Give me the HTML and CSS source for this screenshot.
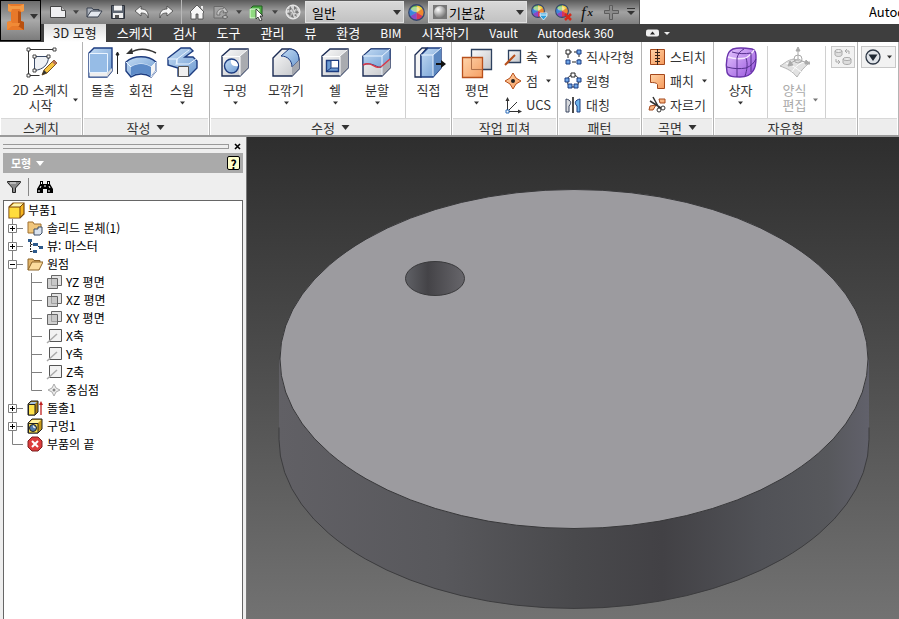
FILE: index.html
```html
<!DOCTYPE html>
<html lang="ko">
<head>
    <meta charset="UTF-8">
    <meta name="viewport" content="width=device-width, initial-scale=1.0">
    <title>Autodesk Inventor</title>
    <link rel="stylesheet" href="styles.css">
</head>
<body>
    <!-- Shared shapes -->
    <svg class="defs" width="0" height="0" aria-hidden="true">
        <defs>
            <linearGradient id="blue" x1="0" y1="0" x2="1" y2="1"><stop offset="0" stop-color="#c4dcf4"/><stop offset="1" stop-color="#6f9cd2"/></linearGradient>
            <linearGradient id="grey" x1="0" y1="0" x2="1" y2="1"><stop offset="0" stop-color="#fafafa"/><stop offset="1" stop-color="#c2c4c8"/></linearGradient>
            <linearGradient id="orange" x1="0" y1="0" x2="1" y2="1"><stop offset="0" stop-color="#ffd2a6"/><stop offset="1" stop-color="#f59a5c"/></linearGradient>
            <linearGradient id="purple" x1="0" y1="0" x2="1" y2="1"><stop offset="0" stop-color="#e6c8ff"/><stop offset="1" stop-color="#9550dc"/></linearGradient>
            <radialGradient id="ball" cx=".35" cy=".3" r=".8"><stop offset="0" stop-color="#fff"/><stop offset="1" stop-color="#666"/></radialGradient>
            <linearGradient id="side" x1="0" x2="1"><stop offset="0" stop-color="#616065"/><stop offset=".28" stop-color="#58585c"/><stop offset=".5" stop-color="#49494c"/><stop offset=".65" stop-color="#424145"/><stop offset=".82" stop-color="#515257"/><stop offset=".93" stop-color="#57585c"/><stop offset="1" stop-color="#61616b"/></linearGradient>
            <linearGradient id="bore" x1="0" x2="1"><stop offset="0" stop-color="#606166"/><stop offset=".38" stop-color="#444347"/><stop offset="1" stop-color="#67666b"/></linearGradient>
        </defs>
        <symbol id="caret" viewBox="0 0 8 5"><path d="M0 0h8L4 5z" fill="currentColor"/></symbol>
        <symbol id="wheel" viewBox="0 0 16 16">
            <path d="M8 8V1a7 7 0 0 1 6 3.500z" fill="#f2d03c"/><path d="M8 8l6-3.500a7 7 0 0 1 0 7z" fill="#f0882e"/>
            <path d="M8 8l6 3.500A7 7 0 0 1 8 15z" fill="#d8365a"/><path d="M8 8v7a7 7 0 0 1-6-3.500z" fill="#8a48c8"/>
            <path d="M8 8l-6 3.500a7 7 0 0 1 0-7z" fill="#3b86dc"/><path d="M8 8L2 4.500A7 7 0 0 1 8 1z" fill="#63b848"/>
            <circle cx="8" cy="8" r="7.300" fill="none" stroke="#34466e" stroke-width="1.200"/><ellipse cx="7" cy="5" rx="4" ry="2.500" fill="#fff" opacity=".45"/>
        </symbol>
        <symbol id="t-line" viewBox="0 0 19 18"><path d="M8.500 0v18" stroke="#808080"/></symbol>
        <symbol id="t-tee" viewBox="0 0 19 18"><path d="M8.500 0v18M8 9.500h12" stroke="#808080"/></symbol>
        <symbol id="t-end" viewBox="0 0 19 18"><path d="M8.500 0v9.500h11" fill="none" stroke="#808080"/></symbol>
        <symbol id="t-plus" viewBox="0 0 19 18"><path d="M8.500 0v18M8 9.500h12" stroke="#808080"/><path d="M4.500 5.500h8v8h-8z" fill="#fff" stroke="#808080"/><path d="M6 9.500h5M8.500 7v5" stroke="#000"/></symbol>
        <symbol id="t-minus" viewBox="0 0 19 18"><path d="M8.500 0v18M8 9.500h12" stroke="#808080"/><path d="M4.500 5.500h8v8h-8z" fill="#fff" stroke="#808080"/><path d="M6 9.500h5" stroke="#000"/></symbol>
        <symbol id="n-plane" viewBox="0 0 16 16"><path d="M5.500 1.500h10v10h-10z" fill="#e4e4e4" stroke="#666"/><path d="M1.500 4.500h10v10h-10z" fill="#bbb" fill-opacity=".7" stroke="#666"/></symbol>
        <symbol id="n-axis" viewBox="0 0 16 16"><path d="M3.500 1.500h12v12h-12z" fill="#f2f2f2" stroke="#555"/><path d="M1 15L11 6" stroke="#aaa" stroke-width="1.500"/></symbol>
    </svg>

    <header class="titlebar">
        <button class="app-menu" aria-label="Inventor">
            <svg width="20" height="28" viewBox="0 0 20 28"><path d="M2 1h16v7l-3 1v9l3 1v8H1v-8l4-1V9L2 8z" fill="#e8792a"/><path d="M2 1l3 2h9l4-2v7l-3 1-1-3H6L5 9 2 8z" fill="#f39a45"/><path d="M12 8l3 1v9l3 1v8l-6-4z" fill="#b9500f"/><path d="M5 18l-4 1v8l5-4h7l1-3H6z" fill="#f08a36"/></svg>
            <svg class="caret" width="8" height="5"><use href="#caret"/></svg>
        </button>
        <div class="bars">
            <div class="top-row">
                <div class="quickbar">
                    <button class="quick" aria-label="새로 만들기"><svg width="18" height="16" viewBox="0 0 18 16"><path d="M1.500 2.500h11l4 4v7h-15z" fill="#f0f0f2" stroke="#444"/><path d="M12.500 2.500v4h4" fill="#bbb" stroke="#555"/></svg></button>
                    <button class="drop" aria-label="새로 만들기 옵션"><svg width="6" height="4"><use href="#caret"/></svg></button>
                    <button class="quick" aria-label="열기"><svg width="18" height="16" viewBox="0 0 18 16"><path d="M2 13V4h5l1 1.500h6V8" fill="#aeb4be" stroke="#38404e"/><path d="M2 13L6 7h11l-4 6z" fill="#e4e8ee" stroke="#38404e"/></svg></button>
                    <button class="quick" aria-label="저장"><svg width="16" height="16" viewBox="0 0 16 16"><path d="M1.500 1.500h13v13h-13z" fill="#5c6470" stroke="#2c3038"/><path d="M4 1.500h8v5H4z" fill="#f4f4f4"/><path d="M3 9h10v5H3z" fill="#eee"/><path d="M5 11h4v3H5z" fill="#555"/></svg></button>
                    <button class="quick" aria-label="실행 취소"><svg width="16" height="16" viewBox="0 0 16 16"><path d="M1 7l6-5v3c5 0 8 3 7 9-1-4-3-5-7-5v3z" fill="#f4f4f4" stroke="#444" stroke-width=".8"/></svg></button>
                    <button class="quick" aria-label="다시 실행"><svg width="16" height="16" viewBox="0 0 16 16"><path d="M15 7L9 2v3C4 5 1 8 2 14c1-4 3-5 7-5v3z" fill="#f4f4f4" stroke="#444" stroke-width=".8"/></svg></button>
                    <span class="quick-sep"></span>
                    <button class="quick" aria-label="홈"><svg width="16" height="16" viewBox="0 0 16 16"><path d="M8 1l7 7-1 1v6H9v-5H7v5H2V9L1 8z" fill="#f6f6f6" stroke="#444" stroke-width=".8"/><path d="M12 2h2v4l-2-2z" fill="#eee"/></svg></button>
                    <button class="quick" aria-label="업데이트"><svg width="17" height="16" viewBox="0 0 17 16"><path d="M1 2.500h9l3 3V14H1z" fill="#a2a2a2" stroke="#6a6a6a"/><path d="M4 11a5 5 0 0 1 6-6l1-2 4 5-5 1 1-2a3 3 0 0 0-4 4z" fill="#c4c4c4" stroke="#666" stroke-width=".8"/><path d="M9 13l3-2 3 2-3 2z" fill="#bbb" stroke="#666"/></svg></button>
                    <button class="drop" aria-label="업데이트 옵션"><svg width="6" height="4"><use href="#caret"/></svg></button>
                    <button class="quick" aria-label="선택"><svg width="16" height="17" viewBox="0 0 16 17"><path d="M1 5l3-3h9v9l-3 3H1z" fill="#4fae45" stroke="#1f5c1f"/><path d="M1 5h9v9H1z" fill="#8fda80" stroke="#e6ffe0"/><path d="M7 5v10l2-2 2 4 2-1-2-4h3z" fill="#fff" stroke="#222" stroke-width=".8"/></svg></button>
                    <button class="drop" aria-label="선택 옵션"><svg width="6" height="4"><use href="#caret"/></svg></button>
                    <button class="quick" aria-label="재질 편집"><svg width="16" height="16" viewBox="0 0 16 16"><circle cx="8" cy="8" r="7" fill="#d4d4d4" stroke="#f0f0f0"/><path d="M5 2l2 3-3 2zM9 2l3 2-3 2zM12 6l2 3-4 0zM2 9l4-1-1 4zM7 9l2 5-3-1zM11 10l1 3-3-2z" fill="#777"/><path d="M7 5l2 4M4 7l3 2M12 4l-2 5M6 8l-1 5M11 10l2-1M2 6l3-1" stroke="#8c8c8c" stroke-width=".8"/></svg></button>
                    <div class="combo">
                        <select aria-label="재질"><option>일반</option></select>
                        <svg class="caret" width="8" height="5"><use href="#caret"/></svg>
                    </div>
                    <button class="quick" aria-label="모양 색상"><svg width="17" height="17"><use href="#wheel"/></svg></button>
                    <div class="combo">
                        <svg width="14" height="14" viewBox="0 0 14 14"><path d="M0 0h14v14H0z" fill="#777"/><circle cx="7" cy="7" r="6" fill="url(#ball)"/></svg>
                        <select aria-label="모양"><option>기본값</option></select>
                        <svg class="caret" width="8" height="5"><use href="#caret"/></svg>
                    </div>
                    <button class="quick" aria-label="모양 조정"><svg width="17" height="17" viewBox="0 0 17 17"><svg width="14" height="14"><use href="#wheel"/></svg><path d="M9 9h7v3l-3.500 4L9 12z" fill="#2d9fdc" stroke="#e4f6ff" stroke-width=".8"/><path d="M9 11h7" stroke="#fff"/></svg></button>
                    <button class="quick" aria-label="모양 지우기"><svg width="17" height="17" viewBox="0 0 17 17"><svg width="14" height="14"><use href="#wheel"/></svg><path d="M10 10l6 6m0-6l-6 6" stroke="#d42a1c" stroke-width="2.500"/></svg></button>
                    <button class="quick fx" aria-label="매개변수"><i>f</i><sub>x</sub></button>
                    <button class="quick" aria-label="추가"><svg width="17" height="17" viewBox="0 0 17 17"><path d="M6.500 1.500h3v5h6v3h-6v6h-3v-6h-5v-3h5z" fill="#8a8a8a" stroke="#5c5c5c"/></svg></button>
                    <button class="drop wide" aria-label="빠른 실행 사용자화"><svg width="8" height="8" viewBox="0 0 8 8"><path d="M0 .5h8" stroke="#333"/><path d="M0 3h8L4 7z" fill="#333"/></svg></button>
                </div>
                <span class="app-title">Autodesk Inventor</span>
            </div>
            <nav class="tabs">
                <a class="tab active" href="#">3D 모형</a>
                <a class="tab" href="#">스케치</a>
                <a class="tab" href="#">검사</a>
                <a class="tab" href="#">도구</a>
                <a class="tab" href="#">관리</a>
                <a class="tab" href="#">뷰</a>
                <a class="tab" href="#">환경</a>
                <a class="tab latin" href="#">BIM</a>
                <a class="tab" href="#">시작하기</a>
                <a class="tab latin" href="#">Vault</a>
                <a class="tab latin" href="#">Autodesk 360</a>
                <button class="minimize" aria-label="리본 최소화"><svg width="26" height="8" viewBox="0 0 26 8"><rect y=".5" width="13" height="7" rx="2" fill="#eee"/><path d="M4 5.500h5l-2.500-3z" fill="#222"/><path d="M18 3h6l-3 3z" fill="#eee"/></svg></button>
            </nav>
        </div>
    </header>

    <section class="ribbon">
        <div class="panel">
            <div class="tools">
                <button class="tool sketch">
                    <svg width="34" height="34" viewBox="0 0 34 34"><path d="M4.500 3.500h26M4.500 3.500v26h11" fill="none" stroke="#333"/><path d="M10.500 10.500h14c0 8-5 13-14 14z" fill="#eef1f5" stroke="#3a4a68"/><path d="M3 2h3v3H3zM29 2h3v3h-3zM3 28h3v3H3zM9 9h3v3H9zM23 9h3v3h-3zM9 23h3v3H9z" fill="#fff" stroke="#333" stroke-width=".9"/><path d="M18 29l2-5L30 14l3 3-10 10z" fill="#f6c440" stroke="#7a5520"/><path d="M28 16l2-2 3 3-2 2z" fill="#b87058"/><path d="M18 29l2-5 3 3z" fill="#333"/></svg>
                    <span>2D 스케치<br>시작</span>
                </button>
                <svg class="caret side" width="5" height="4"><use href="#caret"/></svg>
            </div>
            <h2>스케치</h2>
        </div>

        <div class="panel">
            <div class="tools create">
                <button class="tool">
                    <svg width="34" height="34" viewBox="0 0 34 34"><path d="M3 7l5-5h18v23l-5 6H3z" fill="url(#blue)" stroke="#1d3c80" stroke-width="1.400"/><path d="M3.500 7.500h18v19h-18z" fill="#96bce6" stroke="#eaf4ff"/><path d="M3.500 27h18v3.500h-18z" fill="#eee"/><path d="M21 27l5-5v3l-5 6z" fill="#ddd"/><path d="M31.500 28V7M30 9l1.500-3L33 9z" fill="#222" stroke="#222"/></svg>
                    <span>돌출</span>
                </button>
                <button class="tool">
                    <svg width="34" height="34" viewBox="0 0 34 34"><path d="M6 7c7-5 17-5 26 0" fill="none" stroke="#333" stroke-width="1.500"/><path d="M2 8l6-6 1 6z" fill="#333"/><path d="M2 16c8-7 22-7 30 0v9l-5 6c-6-4-14-4-20 0l-5-6z" fill="url(#blue)" stroke="#1d3c80" stroke-width="1.400"/><path d="M2 16l5 5c6-4 14-4 20 0v10l5-6v-9l-5 5" fill="none" stroke="#eaf4ff"/><path d="M7 21c6-4 14-4 20 0v9c-6-4-14-4-20 0z" fill="#5d8bc8"/><path d="M27 21l4-4v8l-4 5z" fill="#f4f4f4"/></svg>
                    <span>회전</span>
                </button>
                <button class="tool">
                    <svg width="34" height="34" viewBox="0 0 34 34"><path d="M3 12L16 2h9l3 3-8 6h8l4 4v7l-8 8H13v-8L3 19z" fill="url(#blue)" stroke="#1d3c80" stroke-width="1.400"/><path d="M3 13h9l12-9M12 13v5h12l7-5M12 13l-1 6" fill="none" stroke="#eaf4ff"/><path d="M13.500 20.500h10v10h-10z" fill="#f0f0f0" stroke="#555"/></svg>
                    <span>스윕</span>
                    <svg class="caret" width="5" height="4"><use href="#caret"/></svg>
                </button>
            </div>
            <h2>작성 <svg width="9" height="5"><use href="#caret"/></svg></h2>
        </div>

        <div class="panel">
            <div class="tools modify">
                <button class="tool">
                    <svg width="34" height="34" viewBox="0 0 34 34"><path d="M4 10l8-7h18v19l-8 8H4z" fill="url(#grey)" stroke="#1c2c54" stroke-width="1.400"/><path d="M22 10l8-7v19l-8 8z" fill="#a9abb0"/><path d="M4.500 10.500H22v19M22 10l7-6" fill="none" stroke="#fff"/><circle cx="13.500" cy="20" r="7" fill="url(#blue)" stroke="#1d3c80" stroke-width="1.400"/><path d="M13 14c-1 4 2 7 7 6 0-4-3-6-7-6z" fill="#fff"/></svg>
                    <span>구멍</span>
                    <svg class="caret" width="5" height="4"><use href="#caret"/></svg>
                </button>
                <button class="tool">
                    <svg width="34" height="34" viewBox="0 0 34 34"><path d="M4 12l9-9h7c7 0 10 5 10 11v9l-7 7H4z" fill="url(#grey)" stroke="#1c2c54" stroke-width="1.400"/><path d="M12 10l8-7c7 0 10 5 10 11l-7 7c0-6-4-11-11-11z" fill="url(#blue)" stroke="#1d3c80"/><path d="M23 21l7-7v9l-7 7z" fill="#a5a8af"/></svg>
                    <span>모깎기</span>
                    <svg class="caret" width="5" height="4"><use href="#caret"/></svg>
                </button>
                <button class="tool">
                    <svg width="34" height="34" viewBox="0 0 34 34"><path d="M4 10l8-7h18v19l-8 8H4z" fill="url(#grey)" stroke="#1c2c54" stroke-width="1.400"/><path d="M22 10l8-7v19l-8 8z" fill="#a9abb0"/><path d="M4.500 10.500H22v19M22 10l7-6" fill="none" stroke="#fff"/><path d="M8.500 14.500h12v11h-12z" fill="#6d9bd2" stroke="#1d3c80" stroke-width="1.400"/><path d="M13 15h7v7h-7z" fill="#fff"/><path d="M13 15v7h7M13 22l-4 3" fill="none" stroke="#1d3c80"/></svg>
                    <span>쉘</span>
                    <svg class="caret" width="5" height="4"><use href="#caret"/></svg>
                </button>
                <button class="tool">
                    <svg width="34" height="34" viewBox="0 0 34 34"><path d="M3 10l8-7h19v19l-8 8H3z" fill="url(#grey)" stroke="#1c2c54" stroke-width="1.400"/><path d="M3 10l8-7h19v11l-8 7c-5 2-9-6-19-2z" fill="url(#blue)" stroke="#1d3c80"/><path d="M22 20l8-7v9l-8 8z" fill="#a9abb0"/><path d="M3 10h19v19M22 10l8-7" fill="none" stroke="#eaf4ff"/><path d="M3 19c9-5 12 6 19 1l8-7" fill="none" stroke="#da3848" stroke-width="1.500"/></svg>
                    <span>분할</span>
                    <svg class="caret" width="5" height="4"><use href="#caret"/></svg>
                </button>
                <button class="tool divided">
                    <svg width="34" height="34" viewBox="0 0 34 34"><path d="M3 9l7-7h5L9 9v22H3z" fill="#f4f4f4" stroke="#1c2c54" stroke-width="1.300"/><path d="M9 9l7-7h13v20l-8 9H9z" fill="url(#blue)" stroke="#1d3c80" stroke-width="1.400"/><path d="M21 9l8-7v20l-8 9z" fill="#5c88c0"/><path d="M9 9h12v21M21 9l8-7" fill="none" stroke="#eaf4ff"/><path d="M24 17h5v-3l5 4-5 4v-3h-5z" fill="#111"/></svg>
                    <span>직접</span>
                </button>
            </div>
            <h2>수정 <svg width="9" height="5"><use href="#caret"/></svg></h2>
        </div>

        <div class="panel">
            <div class="tools">
                <button class="tool plane">
                    <svg width="34" height="34" viewBox="0 0 34 34"><path d="M11.500 3.500h20v20h-20z" fill="url(#grey)" stroke="#2c405e" stroke-width="1.300"/><path d="M2.500 11.500h20v20h-20z" fill="url(#orange)" fill-opacity=".95" stroke="#b8501c" stroke-width="1.300"/><path d="M11.500 11v12.500H22" fill="none" stroke="#b07048"/></svg>
                    <span>평면</span>
                    <svg class="caret" width="5" height="4"><use href="#caret"/></svg>
                </button>
                <div class="rows">
                    <button class="row"><svg width="18" height="18" viewBox="0 0 18 18"><path d="M4.500 2.500h12v12h-12z" fill="url(#grey)" stroke="#2c405e" stroke-width="1.300"/><path d="M1 17L11 7" stroke="#b8501c" stroke-width="2"/></svg><span>축</span><svg class="caret end" width="5" height="4"><use href="#caret"/></svg></button>
                    <button class="row"><svg width="18" height="18" viewBox="0 0 18 18"><path d="M9 1l3 5 5 3-5 3-3 5-3-5-5-3 5-3z" fill="url(#orange)" stroke="#b8501c"/><circle cx="9" cy="9" r="2" fill="#222"/></svg><span>점</span><svg class="caret end" width="5" height="4"><use href="#caret"/></svg></button>
                    <button class="row"><svg width="18" height="18" viewBox="0 0 18 18"><path d="M3.500 3v12.500H16M3.500 15.500L13 6" fill="none" stroke="#333"/><path d="M1.500 5l2-4 2 4zM14 13.500l4 2-4 2z" fill="#333"/><path d="M2 14h3v3H2z" fill="#fff" stroke="#286bb8"/></svg><span>UCS</span></button>
                </div>
            </div>
            <h2>작업 피쳐</h2>
        </div>

        <div class="panel">
            <div class="tools list">
                <div class="rows">
                    <button class="row"><svg width="18" height="18" viewBox="0 0 18 18"><path d="M4 4h11v10H4z" fill="none" stroke="#222" stroke-dasharray="4 2"/><path d="M2 2h4v4H2z" fill="#fff" stroke="#222"/><path d="M13 2h4v4h-4zM2 12h4v4H2zM13 12h4v4h-4z" fill="#6fa6e8" stroke="#1d3c80"/></svg><span>직사각형</span></button>
                    <button class="row"><svg width="18" height="18" viewBox="0 0 18 18"><circle cx="9" cy="9" r="6" fill="none" stroke="#333"/><path d="M7 1h4v4H7z" fill="#fff" stroke="#222"/><path d="M1 6h4v4H1zM13 6h4v4h-4zM4 12h4v4H4zM10 12h4v4h-4z" fill="#6fa6e8" stroke="#1d3c80"/></svg><span>원형</span></button>
                    <button class="row"><svg width="18" height="18" viewBox="0 0 18 18"><path d="M2 3c5 1 6 4 3 7v6H2z" fill="#d8dade" stroke="#3a4660"/><path d="M16 3c-5 1-6 4-3 7v6h3z" fill="#6cb4ec" stroke="#1d3c80"/><path d="M9 1v16" stroke="#111" stroke-width="1.500"/></svg><span>대칭</span></button>
                </div>
            </div>
            <h2>패턴</h2>
        </div>

        <div class="panel">
            <div class="tools list">
                <div class="rows">
                    <button class="row"><svg width="18" height="18" viewBox="0 0 18 18"><path d="M2.500 1.500h14v15h-14z" fill="url(#orange)" stroke="#a4481c"/><path d="M9.500 1v16M7 4.500h5M7 7.500h5M7 10.500h5M7 13.500h5" stroke="#3a2418"/></svg><span>스티치</span></button>
                    <button class="row"><svg width="18" height="18" viewBox="0 0 18 18"><path d="M2.500 2.500h14v14h-7v-4c-1-2-4-2-7-2z" fill="url(#orange)" stroke="#a4481c"/></svg><span>패치</span><svg class="caret end" width="5" height="4"><use href="#caret"/></svg></button>
                    <button class="row"><svg width="18" height="18" viewBox="0 0 18 18"><path d="M11 3h6v4h-5zM2 10l6-1-3 5H1z" fill="url(#orange)" stroke="#a4481c"/><path d="M5 1l6 11M2 5l11 7" stroke="#333" stroke-width="1.500"/><circle cx="11" cy="14" r="2" fill="none" stroke="#333"/><circle cx="15" cy="12" r="2" fill="none" stroke="#333"/></svg><span>자르기</span></button>
                </div>
            </div>
            <h2>곡면 <svg width="9" height="5"><use href="#caret"/></svg></h2>
        </div>

        <div class="panel">
            <div class="tools freeform">
                <button class="tool">
                    <svg width="34" height="34" viewBox="0 0 34 34"><path d="M9 3c6-2 13-1 19 0 4 1 4 5 4 9s0 9-3 13c-3 5-7 6-13 6S4 31 3 26 2 17 3 12s2-7 6-9z" fill="url(#purple)" stroke="#6a34ac" stroke-width="1.400"/><path d="M4 11c6 2 12 2 18 1 3-2 6-4 8-8" fill="none" stroke="#f6e8ff" stroke-width="1.500"/><path d="M22 12c2 6 1 12-1 18M13 12V31M3 21c7 2 13 2 19 1 5-2 8-5 10-9M13 12c1-4 3-7 7-9M8 6c7 2 13 2 19 1v19" fill="none" stroke="#56308e"/></svg>
                    <span>상자</span>
                    <svg class="caret" width="5" height="4"><use href="#caret"/></svg>
                </button>
                <button class="tool divided edit" disabled>
                    <svg width="34" height="34" viewBox="0 0 34 34"><path d="M2 20c4-2 7-6 14-7 5 2 10 4 16 3-4 4-8 7-13 15-5-6-9-8-17-11z" fill="#e2e2e2" stroke="#b4b4b4"/><path d="M8 17c6 2 10 5 15 9M14 26c3-5 6-8 12-10" fill="none" stroke="#fff"/><circle cx="20" cy="13" r="4" fill="none" stroke="#aaa"/><path d="M20 13V4M20 13l9 4M20 13l-9 5M18 5l2-4 2 4zM28 14l4 4h-5zM12 15l-2 5 5-1z" fill="#aaa" stroke="#aaa"/></svg>
                    <span>양식<br>편집</span>
                </button>
                <svg class="caret side muted" width="5" height="4"><use href="#caret"/></svg>
                <div class="divided convert">
                    <button class="boxed" aria-label="변환" disabled><svg width="18" height="18" viewBox="0 0 18 18"><path d="M1 3v4c1 2 6 2 7 0V3M9 11v4c1 2 7 2 8 0v-4" fill="#ddd" stroke="#aaa"/><ellipse cx="4.500" cy="3" rx="3.500" ry="1.500" fill="#eee" stroke="#aaa"/><ellipse cx="13" cy="11" rx="4" ry="1.500" fill="#eee" stroke="#aaa"/><path d="M15 6V3h-4M13 1l-2 2 2 2M2 11v3h4M4 12l2 2-2 2" fill="none" stroke="#aaa"/></svg></button>
                </div>
            </div>
            <h2>자유형</h2>
        </div>

        <div class="panel">
            <div class="tools extra">
                <button class="boxed" aria-label="표시"><svg width="16" height="16" viewBox="0 0 16 16"><circle cx="8" cy="8" r="7" fill="#dfe3e8" stroke="#2d3745" stroke-width="1.300"/><path d="M3.500 5.500h9L8 12z" fill="#1f2833"/></svg><svg class="caret" width="5" height="4"><use href="#caret"/></svg></button>
            </div>
            <h2></h2>
        </div>
    </section>

    <main class="workspace">
        <aside class="browser">
            <div class="grip"><span></span><button aria-label="닫기"><svg width="7" height="7" viewBox="0 0 7 7"><path d="M1 1l5 5m0-5L1 6" stroke="#000" stroke-width="1.600"/></svg></button></div>
            <div class="browser-head">
                <button>모형 <svg width="8" height="5"><use href="#caret"/></svg></button>
                <button class="help" aria-label="도움말">?</button>
            </div>
            <div class="browser-tools">
                <button aria-label="필터"><svg width="14" height="12" viewBox="0 0 14 12"><path d="M.5.500h13v1L8.500 7v4.500h-3V7l-5-5.500z" fill="#888" stroke="#222"/><path d="M3 2h6" stroke="#eee"/></svg></button>
                <button class="find" aria-label="찾기"><svg width="16" height="14" viewBox="0 0 16 14"><path d="M3 1h3v3h4V1h3v3l3 5v4h-6V9H6v4H0V9l3-5z" fill="#000"/><path d="M2 10v2M4.500 2v2M11.500 2v2M12 10v2M4 6L3 8M12 6l1 2M8 5v2" stroke="#fff"/></svg></button>
            </div>
            <ul class="tree">
                <li class="root"><svg width="17" height="17" viewBox="0 0 17 17"><path d="M1 5l4-4h11v11l-4 4H1z" fill="#f6b51e" stroke="#7a4a10" stroke-width="1.200"/><path d="M1.500 5.500h10v10h-10z" fill="#ffdc3c"/><path d="M2 5l4-3.500h9.500L12 5z" fill="#fff6b0"/><path d="M1 5h11v11M12 5l4-4" fill="none" stroke="#7a4a10"/></svg><span>부품1</span></li>
                <li><svg class="cell"><use href="#t-plus"/></svg><svg class="node" viewBox="0 0 16 16"><path d="M1 2h5l1 2h7v9H1z" fill="#f0c67c" stroke="#a07030"/><path d="M7 9h4V7h4v6l-2 2H7z" fill="#d9e2ee" stroke="#3c4c64"/></svg><span>솔리드 본체(1)</span></li>
                <li><svg class="cell"><use href="#t-plus"/></svg><svg class="node" viewBox="0 0 16 16"><path d="M3.500 4v10M3.500 6.500H6M3.500 13.500H6M11 8.500h2" stroke="#222" stroke-dasharray="2 1"/><path d="M1 1h4v3H1zM6 5h5v3H6zM6 12h4v3H6zM12 8h4v3h-4z" fill="#2d5a8c"/></svg><span>뷰: 마스터</span></li>
                <li><svg class="cell"><use href="#t-minus"/></svg><svg class="node" viewBox="0 0 16 16"><path d="M1 14V3h5l1 1.500h6V7" fill="#e2b468" stroke="#8c6428"/><path d="M1 14L5 6h11l-4 8z" fill="#fbdc9c" stroke="#8c6428"/></svg><span>원점</span></li>
                <li><svg class="cell"><use href="#t-line"/></svg><svg class="cell"><use href="#t-tee"/></svg><svg class="node"><use href="#n-plane"/></svg><span>YZ 평면</span></li>
                <li><svg class="cell"><use href="#t-line"/></svg><svg class="cell"><use href="#t-tee"/></svg><svg class="node"><use href="#n-plane"/></svg><span>XZ 평면</span></li>
                <li><svg class="cell"><use href="#t-line"/></svg><svg class="cell"><use href="#t-tee"/></svg><svg class="node"><use href="#n-plane"/></svg><span>XY 평면</span></li>
                <li><svg class="cell"><use href="#t-line"/></svg><svg class="cell"><use href="#t-tee"/></svg><svg class="node"><use href="#n-axis"/></svg><span>X축</span></li>
                <li><svg class="cell"><use href="#t-line"/></svg><svg class="cell"><use href="#t-tee"/></svg><svg class="node"><use href="#n-axis"/></svg><span>Y축</span></li>
                <li><svg class="cell"><use href="#t-line"/></svg><svg class="cell"><use href="#t-tee"/></svg><svg class="node"><use href="#n-axis"/></svg><span>Z축</span></li>
                <li><svg class="cell"><use href="#t-line"/></svg><svg class="cell"><use href="#t-end"/></svg><svg class="node" viewBox="0 0 16 16"><path d="M8 2l2 4 4 2-4 2-2 4-2-4-4-2 4-2z" fill="#eee" stroke="#aaa"/><circle cx="8" cy="8" r="1.500" fill="#888"/></svg><span>중심점</span></li>
                <li><svg class="cell"><use href="#t-plus"/></svg><svg class="node" viewBox="0 0 16 16"><path d="M1 4l3-3h7v11l-3 3H1z" fill="#a87c10" stroke="#222"/><path d="M1.500 4.500H8V15H1.500z" fill="#ffe34a" stroke="#222"/><path d="M2 4l2-2h6L8 4z" fill="#a8c4e0"/><path d="M14 15V3" stroke="#c02020" stroke-width="1.300"/><path d="M12 5l2-4 2 4z" fill="#c02020"/></svg><span>돌출1</span></li>
                <li><svg class="cell"><use href="#t-plus"/></svg><svg class="node" viewBox="0 0 16 16"><path d="M1 5l4-4h10v10l-4 4H1z" fill="#c89a18" stroke="#222"/><path d="M1.500 5.500H11V15H1.500z" fill="#ffe34a" stroke="#222"/><path d="M2 5l3-3h9l-3 3z" fill="#fff3a0"/><circle cx="6" cy="10" r="3.500" fill="#4d79a8" stroke="#222"/><path d="M6 7c-1 2 1 4 3 3z" fill="#eee"/></svg><span>구멍1</span></li>
                <li><svg class="cell"><use href="#t-end"/></svg><svg class="node" viewBox="0 0 16 16"><path d="M5 1h6l4 4v6l-4 4H5l-4-4V5z" fill="#dc3c3c" stroke="#7c2020"/><path d="M5 5l6 6m0-6l-6 6" stroke="#fff" stroke-width="2"/></svg><span>부품의 끝</span></li>
            </ul>
        </aside>

        <div class="viewport">
            <svg viewBox="0 0 652 481" role="img" aria-label="구멍이 있는 원판">
                <path d="M32 222v80a295 169 0 0 0 590 0v-80z" fill="url(#side)"/>
                <path d="M32 290v12a295 169 0 0 0 590 0v-12" fill="none" stroke="#3c3c3e"/>
                <ellipse cx="327" cy="221.500" rx="294" ry="169.500" fill="#9c9b9f" stroke="#38383a"/>
                <ellipse cx="188" cy="141" rx="29.500" ry="17" fill="url(#bore)" stroke="#3a3a3c"/>
            </svg>
        </div>
    </main>
</body>
</html>
```

FILE: styles.css
```css
/* General Styles */
* {
    box-sizing: border-box;
}

body {
    display: flex;
    flex-direction: column;
    height: 100vh;
    margin: 0;
    overflow: hidden;
    background: #eeeeee;
    color: #333;
    font-family: "Noto Sans CJK KR", "Noto Sans", sans-serif;
    font-size: 13px;
    line-height: 15px;
}

button {
    padding: 0;
    background: none;
    border: none;
    color: inherit;
    font: inherit;
    cursor: pointer;
}

svg {
    display: block;
    flex: none;
}

.defs {
    position: absolute;
}

.caret {
    color: #333;
}

/* Title bar */
.titlebar {
    display: flex;
    background: #3e3e3e;
}

.app-menu {
    display: flex;
    align-items: center;
    justify-content: space-between;
    width: 41px;
    height: 41px;
    padding: 0 2px 8px 5px;
    background: linear-gradient(#6c6c6c, #a8a8a8 50%, #7c7c7c);
    border: 1px solid #000;
}

.bars {
    flex: 1;
    min-width: 0;
}

.top-row {
    display: flex;
    height: 24px;
    background: #fff;
}

.quickbar {
    display: flex;
    align-items: center;
    padding-left: 5px;
    background: linear-gradient(#5a5a5a, #a2a2a2 50%, #808080);
    border-right: 1px solid #555;
}

.quick {
    display: flex;
    align-items: center;
    justify-content: center;
    width: 24px;
    height: 24px;
}

.drop {
    display: flex;
    justify-content: center;
    width: 12px;
    color: #444;
}

.drop.wide {
    width: 16px;
}

.quick-sep {
    width: 1px;
    height: 24px;
    margin: 0 3px;
    background: #b8b8b8;
}

.combo {
    display: flex;
    align-items: center;
    width: 99px;
    height: 22px;
    padding: 0 2px 0 4px;
    background: linear-gradient(#d8d8d8, #c2c2c2);
    border: 1px solid #e0e0e0;
}

.combo select {
    flex: 1;
    min-width: 0;
    padding: 0 2px;
    appearance: none;
    background: none;
    border: none;
    color: #000;
    font: inherit;
}

.fx {
    gap: 2px;
    color: #111;
    font-family: "Liberation Serif", serif;
    font-size: 17px;
}

.fx sub {
    font-size: 11px;
    font-weight: bold;
    font-style: italic;
}

.app-title {
    flex: 1;
    min-width: 0;
    margin-left: 229px;
    overflow: hidden;
    color: #000;
    line-height: 24px;
    white-space: nowrap;
}

.tabs {
    display: flex;
    height: 18px;
    padding-left: 3px;
}

.tab {
    padding: 0 10px;
    color: #fff;
    line-height: 17px;
    text-decoration: none;
    white-space: nowrap;
}

.tab.active {
    padding: 0 9px;
    margin-right: 1px;
    background: linear-gradient(#dcdcdc, #fff);
    color: #222;
}

.tab.latin {
    font-size: 12px;
}

.minimize {
    margin-left: 22px;
}

/* Ribbon */
.ribbon {
    display: grid;
    grid-template-rows: 93px;
    grid-template-columns: 83fr 127fr 242fr 106fr 84fr 72fr 144fr 41fr;
    background: #fff;
    border-bottom: 2px solid #9a9a9a;
}

.panel {
    display: flex;
    flex-direction: column;
    min-width: 0;
    border-right: 1px solid #b4b4b4;
}

.panel h2 {
    display: flex;
    flex: none;
    align-items: center;
    justify-content: center;
    gap: 6px;
    height: 17px;
    margin: 0 1px;
    background: #ededed;
    border-top: 1px solid #d8d8d8;
    font-size: 13px;
    font-weight: normal;
    line-height: 15px;
}

.tools {
    display: flex;
    flex: 1;
    justify-content: center;
    min-height: 0;
    padding-top: 4px;
}

.tool {
    display: flex;
    flex-direction: column;
    align-items: center;
    width: 42px;
    white-space: nowrap;
}

.tool span {
    margin: 2px 0;
}

.tool:disabled {
    color: #aaa;
}

.tool .caret {
    margin-top: 2px;
}

.tool.sketch {
    width: 64px;
    margin-left: 4px;
}

.caret.side {
    margin-top: 52px;
}

.caret.muted {
    color: #777;
}

.create {
    padding-right: 4px;
}

.create .tool {
    width: 38px;
}

.create .tool:last-child {
    width: 44px;
}

.modify {
    padding-left: 2px;
}

.modify .tool {
    width: 46px;
}

.modify .tool:nth-child(2) {
    width: 56px;
}

.modify .tool:nth-child(3),
.modify .tool:nth-child(4) {
    width: 42px;
}

.modify .divided {
    margin-left: 7px;
}

.divided {
    border-left: 1px solid #d0d0d0;
}

.tool.plane {
    width: 50px;
}

.rows {
    display: flex;
    flex: 1;
    flex-direction: column;
    padding: 0 6px 0 2px;
}

.row {
    display: flex;
    flex: none;
    align-items: center;
    gap: 4px;
    height: 24px;
    padding-bottom: 3px;
    white-space: nowrap;
}

.row .end {
    margin-left: auto;
}

.list .rows {
    padding-left: 6px;
}

.freeform {
    padding-right: 2px;
}

.freeform .tool {
    width: 53px;
}

.freeform .tool.edit {
    width: 46px;
    padding-left: 8px;
}

.convert {
    margin-left: 7px;
    padding-left: 5px;
}

.boxed {
    display: flex;
    align-items: center;
    justify-content: center;
    gap: 6px;
    width: 24px;
    height: 22px;
    background: #f2f2f2;
    border: 1px solid #c8c8c8;
}

.extra .boxed {
    width: 35px;
}

/* Model browser */
.workspace {
    display: flex;
    flex: 1;
    min-height: 0;
}

.browser {
    display: flex;
    flex: 0 0 247px;
    flex-direction: column;
    padding: 5px 3px 0;
    border-right: 1px solid #777;
}

.grip {
    display: flex;
    align-items: center;
    gap: 5px;
    height: 8px;
    margin-bottom: 3px;
}

.grip span {
    flex: 1;
    height: 5px;
    border: 1px solid #999;
    border-left: none;
}

.grip button {
    margin-right: 2px;
}

.browser-head {
    display: flex;
    align-items: center;
    justify-content: space-between;
    height: 20px;
    padding: 0 3px 0 8px;
    background: #aaa;
    color: #fff;
    font-size: 11px;
    font-weight: bold;
}

.browser-head button {
    display: flex;
    align-items: center;
    gap: 5px;
}

.browser-head .help {
    justify-content: center;
    width: 13px;
    height: 14px;
    background: #ffffcc;
    border: 1px solid #000;
    border-radius: 2px;
    color: #000;
    font-size: 12px;
}

.browser-tools {
    display: flex;
    align-items: center;
    height: 27px;
    padding-left: 4px;
}

.find {
    height: 18px;
    margin-left: 7px;
    padding-left: 8px;
    border-left: 1px solid #888;
}

.tree {
    flex: 1;
    margin: 0;
    padding: 0;
    overflow: hidden;
    background: #fff;
    border: 1px solid #666;
    border-bottom: none;
    color: #000;
    font-size: 12px;
    list-style: none;
}

.tree li {
    display: flex;
    align-items: center;
    height: 18px;
    line-height: 18px;
    white-space: nowrap;
}

.tree .root {
    gap: 3px;
    padding-left: 4px;
}

.cell {
    width: 19px;
    height: 18px;
}

.node {
    width: 16px;
    height: 16px;
    margin: 0 4px;
}

/* 3D view */
.viewport {
    flex: 1;
    min-width: 0;
    background: linear-gradient(#2e2e2e, #484848 40%, #727272);
}

.viewport svg {
    width: 100%;
    height: 100%;
}
```
